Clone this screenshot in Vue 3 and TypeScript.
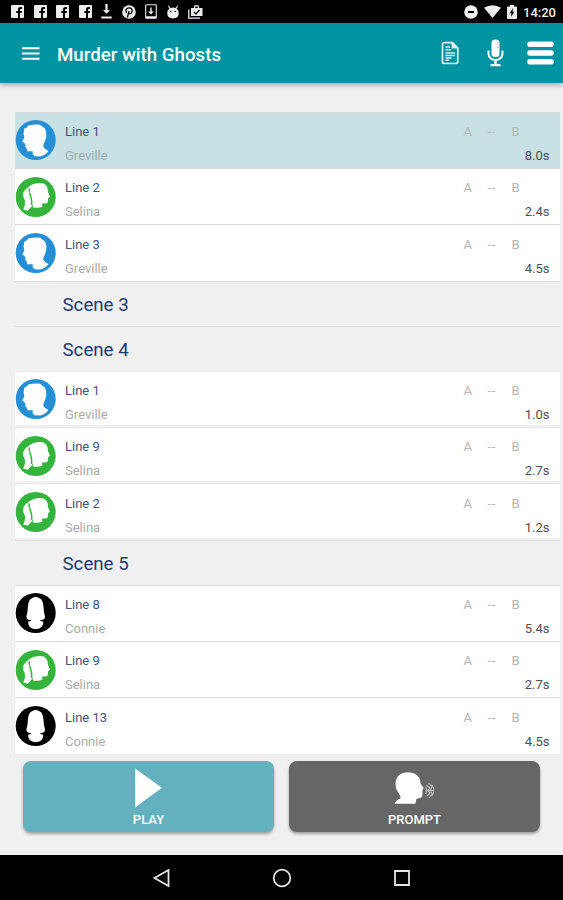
<script setup lang="ts">
type Speaker = 'Greville' | 'Selina' | 'Connie'

interface LineItem {
  title: string
  speaker: Speaker
  duration: string
  active?: boolean
}

interface Group {
  scene?: string
  lines: LineItem[]
  faint?: boolean
}

const groups: Group[] = [
  {
    lines: [
      { title: 'Line 1', speaker: 'Greville', duration: '8.0s', active: true },
      { title: 'Line 2', speaker: 'Selina', duration: '2.4s' },
      { title: 'Line 3', speaker: 'Greville', duration: '4.5s' },
    ],
  },
  { scene: 'Scene 3', lines: [] },
  {
    scene: 'Scene 4',
    faint: true,
    lines: [
      { title: 'Line 1', speaker: 'Greville', duration: '1.0s' },
      { title: 'Line 9', speaker: 'Selina', duration: '2.7s' },
      { title: 'Line 2', speaker: 'Selina', duration: '1.2s' },
    ],
  },
  {
    scene: 'Scene 5',
    lines: [
      { title: 'Line 8', speaker: 'Connie', duration: '5.4s' },
      { title: 'Line 9', speaker: 'Selina', duration: '2.7s' },
      { title: 'Line 13', speaker: 'Connie', duration: '4.5s' },
    ],
  },
]

const avatars: Record<Speaker, { tone: string; path: string; detail?: string }> = {
  Greville: {
    tone: 'blue',
    path: 'M8.7 8.5L11 7.5L12.500 5.500Q19 4.200 24.500 4.800L26.500 6.500L29.200 8.500L30.500 12Q31.200 17 29.200 21.500Q27.500 24 27.500 26.500Q28.500 29 32.800 31Q30.500 34.800 24.700 36.500L19 36.300L17 34.300V31.300L11.500 31.300L11 28.500L9.600 27L9.800 25L8.800 23.300L6.500 21.300L8.700 17.500L7.800 13.500Z',
  },
  Selina: {
    tone: 'green',
    path: 'M13 9.700Q17 6.300 22 6.200Q28 5.500 30.500 8.500Q32.500 11 32.300 15L34.200 19.800L32.500 21L32 25.500Q30.500 27 26.200 26.200L26.800 29.700Q22 31.500 17 30.200L17.500 27Q15.800 30.500 12 33.700L7.500 32.500Q10 28 9.200 23.500Q7 20.500 7.300 17Q8 13 13 9.700Z',
    detail: 'M13.900 11.500Q12.700 13.500 14 15.500M14.500 16Q14 18.500 15.300 20.500Q16.500 24 15.800 28',
  },
  Connie: {
    tone: 'black',
    path: 'M20 3.800Q23 4.200 25.700 6.500Q27.500 9 27.800 14Q28 20 29.300 23.200L29 25.500Q27 27.500 24 27.200Q25 28.300 27.500 28.600Q28 31 26.200 33.700Q24 36 20 36.200Q16 36 13.800 33.700Q12 31 12.500 28.600Q15 28.300 16 27.200Q13 27.500 11 25.500L10.700 23.200Q12 20 12.200 14Q12.500 9 14.300 6.500Q17 4.200 20 3.800Z',
  },
}
</script>

<template>
  <div class="screen">
    <header class="status">
      <div class="notifications">
        <svg v-for="n in 4" :key="n" class="fb" viewBox="0 0 13 13">
          <path fill="#eee" d="M1 0h11a1 1 0 0 1 1 1v11a1 1 0 0 1-1 1H1a1 1 0 0 1-1-1V1a1 1 0 0 1 1-1z" />
          <path fill="#000" d="M7 13V8H5.300V6H7V4.500C7 2.800 8 2 9.500 2H11v2h-1c-.8 0-1 .3-1 .9V6h2l-.3 2H9v5z" />
        </svg>
        <svg class="down" viewBox="0 0 11 15">
          <path fill="#eee" d="M4.400 0h2.200v6H9L5.500 9.800 2 6h2.400zM.3 12.400h10.400v2H.3z" />
        </svg>
        <svg class="pin" viewBox="0 0 14 14">
          <circle cx="7" cy="7" r="6.800" fill="#eee" />
          <path d="M5.400 12.500 7 6M4.500 7.800C2.800 4 6 2.600 7.800 2.900c2.600.4 2.900 3.100 1.600 5-.8 1-2.200 1.100-2.900.2" fill="none" stroke="#000" stroke-width="1.300" />
        </svg>
        <svg class="device" viewBox="0 0 12 15">
          <path d="M1.500.7h9a.8.8 0 0 1 .8.8v12a.8.8 0 0 1-.8.8h-9a.8.8 0 0 1-.8-.8v-12a.8.8 0 0 1 .8-.8z" fill="none" stroke="#eee" stroke-width="1.100" />
          <path d="M1 12.200h10v2H1zM5.300 3.500h1.400v4h2L6 10.400 3.300 7.500h2z" fill="#eee" />
        </svg>
        <svg class="bug" viewBox="0 0 12 14">
          <path d="m1.500.5 2 2.600a6 6 0 0 1 5 0l2-2.600.6.4-1.500 2.800Q12 5 11.800 8.500q-.4 4.800-5.800 5Q.6 13.300.2 8.500 0 5 2.400 3.700L.9.9z" fill="#eee" />
          <circle cx="3.700" cy="6.500" r=".8" /><circle cx="8.300" cy="6.500" r=".8" />
        </svg>
        <svg class="shop" viewBox="0 0 15 14">
          <path d="M.8 4.500v8.700h11.200" fill="none" stroke="#eee" stroke-width="1.300" />
          <path d="M3 3h3V1.500Q6 .2 7.300.2h2.400Q11 .2 11 1.500V3h3.500v8H3zm4.200 0h2.600V1.400H7.200z" fill="#eee" />
          <path d="m6 7 2 2 3.500-4" fill="none" stroke="#000" stroke-width="1.300" />
        </svg>
      </div>
      <div class="system">
        <svg class="dnd" viewBox="0 0 14 14">
          <circle cx="7" cy="7" r="6.800" fill="#eee" /><path d="M4 6h6v2H4z" />
        </svg>
        <svg class="wifi" viewBox="0 0 17 13">
          <path d="M0 2.800Q8.500-2.500 17 2.800L8.500 13z" fill="#eee" />
        </svg>
        <svg class="battery" viewBox="0 0 10 14">
          <path d="M3 0h4v1.500h2q1 0 1 1V13q0 1-1 1H1q-1 0-1-1V2.500q0-1 1-1h2z" fill="#eee" />
          <path d="M6 3 2.500 8.200h2L4 12l3.500-5.200h-2z" />
        </svg>
        <span class="clock">14:20</span>
      </div>
    </header>

    <nav class="toolbar">
      <svg class="menu" viewBox="0 0 18 13"><path d="M0 0h18v2H0zM0 5.400h18v2H0zM0 10.800h18v2H0z" fill="#fff" /></svg>
      <h1>Murder with Ghosts</h1>
      <div class="actions">
        <svg class="doc" viewBox="0 0 18 24">
          <path d="M3.500 1.700h8L16.800 7v13.500q0 2-2 2H3.500q-2 0-2-2v-16.800q0-2 2-2z" fill="none" stroke="#d8f3f5" stroke-width="1.700" />
          <path d="M11.200 2V7h5.300z" fill="#d8f3f5" stroke="#d8f3f5" stroke-width="1.200" />
          <path d="M4.500 6h4.500M4.500 8.800h5.500M4.500 12h9.500M4.500 14.500h9.500M4.500 17h6M4.500 19.300h3.500" stroke="#d8f3f5" stroke-width="1.400" />
        </svg>
        <svg class="mic" viewBox="0 0 17 28">
          <rect x="4.500" y=".5" width="8" height="17.500" rx="3.500" fill="#fff" />
          <path d="M9.500 3.500H12M9.500 6H12M9.500 8.500H12" stroke="#9fd5db" stroke-width=".8" />
          <path d="M1.500 11.500v3.300a7 6.200 0 0 0 14 0v-3.300" fill="none" stroke="#fff" stroke-width="2" />
          <path d="M7.300 20.500h2.400V25H13q.8.200.8 2.300H3.200Q3.200 25.200 4 25h3.300z" fill="#fff" />
        </svg>
        <svg class="bars" viewBox="0 0 27 24">
          <path d="M3 3.200h21M3 12h21M3 20.800h21" stroke="#fff" stroke-width="5.600" stroke-linecap="round" />
        </svg>
      </div>
    </nav>

    <main class="script">
      <section v-for="(group, g) in groups" :key="g" :class="{ faint: group.faint }">
        <h2 v-if="group.scene">{{ group.scene }}</h2>
        <article v-for="(line, i) in group.lines" :key="i" class="line" :class="{ active: line.active }">
          <svg class="avatar" :class="avatars[line.speaker].tone" viewBox="0.300 0 40 40">
            <circle cx="20" cy="20" r="20" />
            <path :d="avatars[line.speaker].path" fill="#fff" />
            <path v-if="avatars[line.speaker].detail" class="detail" :d="avatars[line.speaker].detail" />
          </svg>
          <div class="who">
            <span class="title">{{ line.title }}</span>
            <span class="speaker">{{ line.speaker }}</span>
          </div>
          <div class="meta">
            <div class="range"><span>A</span><span class="dash">--</span><span>B</span></div>
            <span class="duration">{{ line.duration }}</span>
          </div>
        </article>
      </section>
    </main>

    <footer class="controls">
      <button class="play">
        <svg viewBox="0 0 28 40"><path d="M0 .500 27 19.700 0 39.500z" fill="#fff" /></svg>
        <span>PLAY</span>
      </button>
      <button class="prompt">
        <svg viewBox="0 0 42 40">
          <path d="M.5 35.800Q2 32 6.500 30.500Q7 28 4.500 25Q1.500 21 1.500 15.300Q2.500 4.500 14 4.300Q22 4.500 25.300 10Q26.500 13 26.500 15.500L29.700 20L28.500 22L28.300 28Q28 30 22.500 30.800L21.300 35.800Z" fill="#fff" />
          <path d="M31.500 19q2 3.500 0 7M32.500 17l3.500 3-2.500 2.500L36 25l-3 3M34.500 15l3.500 3.500-1.500 4L38 26l-3 4M38 17q3.500 5 0 11M31.500 22.500h8" fill="none" stroke="#bbb" stroke-width="1.100" />
        </svg>
        <span>PROMPT</span>
      </button>
    </footer>

    <div class="navbar">
      <svg viewBox="0 0 20 20"><path d="M16.500 2v16L2.500 10z" /></svg>
      <svg viewBox="0 0 20 20"><circle cx="10" cy="10" r="8.300" /></svg>
      <svg viewBox="0 0 20 20"><path d="M3 3h14v14H3z" /></svg>
    </div>
  </div>
</template>

<style>
body {
  margin: 0;
}
</style>

<style scoped>
.screen {
  display: flex;
  flex-direction: column;
  width: 563px;
  height: 900px;
  overflow: hidden;
  background: #f0f0f0;
  font-family: Roboto, "Liberation Sans", sans-serif;
}

svg {
  display: block;
  flex: none;
}

.status {
  display: flex;
  flex: none;
  justify-content: space-between;
  box-sizing: border-box;
  height: 23px;
  padding: 0 7px 0 11px;
  background: #000;
}

.notifications,
.system {
  display: flex;
  align-items: center;
}

.notifications {
  gap: 9.500px;
}

.fb {
  width: 13px;
  height: 13px;
}

.down {
  width: 11px;
  height: 15px;
}

.pin {
  width: 14px;
  height: 14px;
}

.device {
  width: 12px;
  height: 15px;
}

.bug {
  width: 12px;
  height: 14px;
}

.shop {
  width: 15px;
  height: 14px;
}

.dnd {
  width: 14px;
  height: 14px;
  margin-right: 6px;
}

.wifi {
  width: 17px;
  height: 13px;
  margin-right: 6px;
}

.battery {
  width: 10px;
  height: 14px;
  margin-right: 6px;
}

.clock {
  padding-top: 1px;
  color: #eee;
  font-size: 13px;
  font-weight: 500;
  line-height: 23px;
}

.toolbar {
  display: flex;
  flex: none;
  align-items: center;
  box-sizing: border-box;
  height: 60px;
  padding: 0 9px 0 22px;
  background: #0093a1;
  box-shadow: 0 2px 5px rgba(0, 0, 0, 0.3);
}

.menu {
  width: 17.500px;
  height: 13px;
}

h1 {
  margin: 3px 0 0 17.500px;
  color: #fff;
  font-size: 18.700px;
  font-weight: 500;
  line-height: 24px;
}

.actions {
  display: flex;
  align-items: center;
  margin-left: auto;
}

.doc {
  width: 18px;
  height: 24px;
  margin-right: 28px;
}

.mic {
  width: 17px;
  height: 28px;
  margin-right: 23px;
}

.bars {
  width: 27px;
  height: 24px;
}

.script {
  flex: none;
  height: 642px;
  margin: 28.800px 3.500px 0 15px;
}

h2 {
  box-sizing: border-box;
  height: 45.200px;
  margin: 0;
  padding-left: 47.500px;
  border-top: 1px solid #dcdcdc;
  color: #213a72;
  font-size: 18.700px;
  font-weight: 400;
  line-height: 47px;
}

.line {
  display: flex;
  box-sizing: border-box;
  height: 56.250px;
  border-top: 1px solid #d9d9d9;
  background: #fff;
}

.line.active {
  background: #c8e1e5;
}

.faint .line {
  border-top-color: #ebebeb;
  border-bottom: 2px solid #f0f0f0;
}

.avatar {
  width: 40px;
  height: 40px;
  margin: 7.500px 9.500px 0 0.500px;
  overflow: visible;
}

.detail {
  fill: none;
  stroke: #35b43b;
  stroke-width: 1.500;
}

.blue {
  fill: #258fd5;
}

.green {
  fill: #35b43b;
}

.black {
  fill: #000;
}

.who {
  display: flex;
  flex: 1;
  flex-direction: column;
  padding-top: 7.300px;
  font-size: 13px;
  line-height: 24px;
}

.title {
  color: #46527c;
}

.speaker {
  color: #aaa;
}

.active .speaker {
  color: #9eabad;
}

.meta {
  display: flex;
  flex-direction: column;
  width: 96px;
  padding: 7.300px 0 0;
  font-size: 13px;
  line-height: 24px;
}

.range {
  display: flex;
  color: #b5b5b5;
}

.range span {
  width: 24px;
}

.range .dash {
  letter-spacing: 0.600px;
}

.duration {
  align-self: flex-end;
  margin-right: 10px;
  color: #505050;
}

.controls {
  display: flex;
  flex: none;
  gap: 15px;
  height: 71px;
  margin-top: 7.200px;
  padding: 0 23px;
}

button {
  display: flex;
  flex: 1;
  flex-direction: column;
  align-items: center;
  height: 71.500px;
  padding: 0;
  border: 0;
  border-radius: 8px;
  color: #fff;
  font: 500 13px/18px Roboto, "Liberation Sans", sans-serif;
  box-shadow: 0 2px 3px rgba(0, 0, 0, 0.35);
}

.play {
  background: #63b1be;
}

.prompt {
  background: #666;
}

.play svg {
  width: 28px;
  height: 40px;
  margin: 7px 0 3px;
}

.prompt svg {
  width: 42px;
  height: 40px;
  margin: 7px 0 3px;
}

.navbar {
  display: flex;
  flex: none;
  justify-content: center;
  align-items: center;
  gap: 100px;
  height: 45px;
  margin-top: auto;
  background: #000;
}

.navbar svg {
  width: 20px;
  height: 20px;
  fill: none;
  stroke: #e4e4e4;
  stroke-width: 1.800;
}
</style>
